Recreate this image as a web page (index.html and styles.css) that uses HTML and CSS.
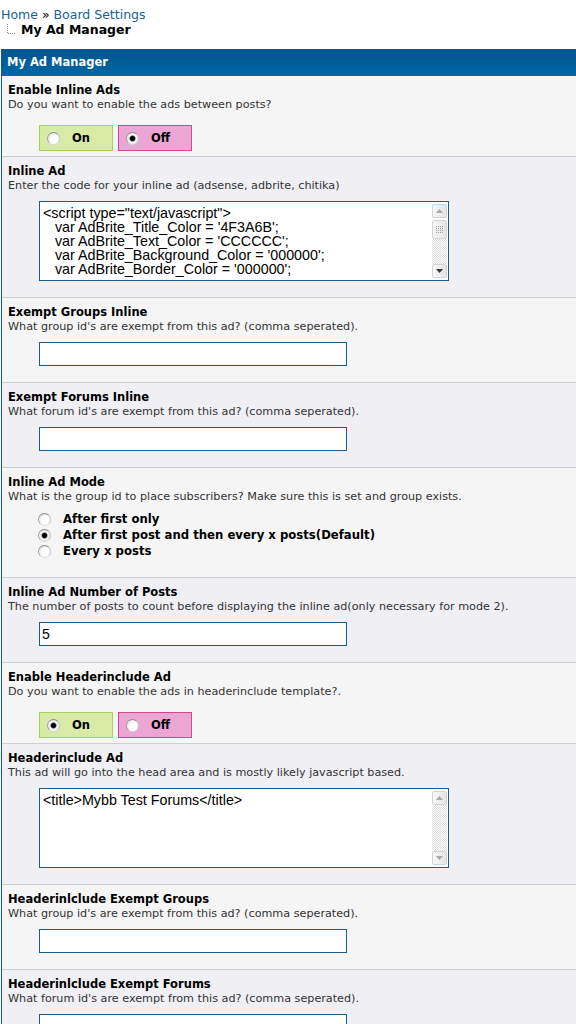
FILE: index.html
```html
<!DOCTYPE html>
<html lang="en">
<head>
    <meta charset="UTF-8">
    <title>My Ad Manager</title>
    <link rel="stylesheet" href="styles.css">
</head>
<body>
<div class="nav">
    <a href="#">Home</a> &raquo; <a href="#">Board Settings</a>
    <div class="nav-current">
        <svg class="tree" width="14" height="15" viewBox="0 0 14 15">
            <path d="M6.5 1V10.5H14" fill="none" stroke="#8a8a8a" stroke-width="1" stroke-dasharray="1 1"/>
        </svg>
        My Ad Manager
    </div>
</div>

<div class="panel">
    <div class="panel-head">My Ad Manager</div>

    <div class="row">
        <div class="label">Enable Inline Ads</div>
        <div class="desc">Do you want to enable the ads between posts?</div>
        <div class="toggle">
            <label class="yes"><input type="radio" name="inline_enable">On</label>
            <label class="no"><input type="radio" name="inline_enable" checked>Off</label>
        </div>
    </div>

    <div class="row">
        <div class="label">Inline Ad</div>
        <div class="desc">Enter the code for your inline ad (adsense, adbrite, chitika)</div>
        <div class="codebox">
            <textarea class="code">&lt;script type="text/javascript"&gt;
   var AdBrite_Title_Color = '4F3A6B';
   var AdBrite_Text_Color = 'CCCCCC';
   var AdBrite_Background_Color = '000000';
   var AdBrite_Border_Color = '000000';

   var AdBrite_URL_Color = '008000';
&lt;/script&gt;
&lt;span style="white-space:nowrap;"&gt;
&lt;script src="http://ads.adbrite.com/mb/text_group.php?sid=0" type="text/javascript"&gt;&lt;/script&gt;
&lt;/span&gt;</textarea>
            <div class="scrollbar">
                <div class="sb-btn">
                    <svg width="7" height="4" viewBox="0 0 7 4"><path d="M0 4L3.5 0L7 4Z" fill="#a8a8a8"/></svg>
                </div>
                <div class="sb-thumb">
                    <svg width="7" height="7" viewBox="0 0 7 7" fill="#9a9a9a">
                        <rect x="0" y="0" width="1" height="1"/><rect x="2" y="0" width="1" height="1"/><rect x="4" y="0" width="1" height="1"/><rect x="6" y="0" width="1" height="1"/>
                        <rect x="0" y="2" width="1" height="1"/><rect x="2" y="2" width="1" height="1"/><rect x="4" y="2" width="1" height="1"/><rect x="6" y="2" width="1" height="1"/>
                        <rect x="0" y="4" width="1" height="1"/><rect x="2" y="4" width="1" height="1"/><rect x="4" y="4" width="1" height="1"/><rect x="6" y="4" width="1" height="1"/>
                        <rect x="0" y="6" width="1" height="1"/><rect x="2" y="6" width="1" height="1"/><rect x="4" y="6" width="1" height="1"/><rect x="6" y="6" width="1" height="1"/>
                    </svg>
                </div>
                <div class="sb-track"></div>
                <div class="sb-btn">
                    <svg width="7" height="4" viewBox="0 0 7 4"><path d="M0 0L3.5 4L7 0Z" fill="#3a3a3a"/></svg>
                </div>
            </div>
        </div>
    </div>

    <div class="row">
        <div class="label">Exempt Groups Inline</div>
        <div class="desc">What group id's are exempt from this ad? (comma seperated).</div>
        <input class="field" type="text">
    </div>

    <div class="row">
        <div class="label">Exempt Forums Inline</div>
        <div class="desc">What forum id's are exempt from this ad? (comma seperated).</div>
        <input class="field" type="text">
    </div>

    <div class="row">
        <div class="label">Inline Ad Mode</div>
        <div class="desc">What is the group id to place subscribers? Make sure this is set and group exists.</div>
        <div class="choices">
            <label><input type="radio" name="inline_mode">After first only</label>
            <label><input type="radio" name="inline_mode" checked>After first post and then every x posts(Default)</label>
            <label><input type="radio" name="inline_mode">Every x posts</label>
        </div>
    </div>

    <div class="row">
        <div class="label">Inline Ad Number of Posts</div>
        <div class="desc">The number of posts to count before displaying the inline ad(only necessary for mode 2).</div>
        <input class="field" type="text" value="5">
    </div>

    <div class="row">
        <div class="label">Enable Headerinclude Ad</div>
        <div class="desc">Do you want to enable the ads in headerinclude template?.</div>
        <div class="toggle">
            <label class="yes"><input type="radio" name="header_enable" checked>On</label>
            <label class="no"><input type="radio" name="header_enable">Off</label>
        </div>
    </div>

    <div class="row">
        <div class="label">Headerinclude Ad</div>
        <div class="desc">This ad will go into the head area and is mostly likely javascript based.</div>
        <div class="codebox">
            <textarea class="code">&lt;title&gt;Mybb Test Forums&lt;/title&gt;</textarea>
            <div class="scrollbar">
                <div class="sb-btn">
                    <svg width="7" height="4" viewBox="0 0 7 4"><path d="M0 4L3.5 0L7 4Z" fill="#a8a8a8"/></svg>
                </div>
                <div class="sb-track"></div>
                <div class="sb-btn">
                    <svg width="7" height="4" viewBox="0 0 7 4"><path d="M0 0L3.5 4L7 0Z" fill="#a8a8a8"/></svg>
                </div>
            </div>
        </div>
    </div>

    <div class="row">
        <div class="label">Headerinlclude Exempt Groups</div>
        <div class="desc">What group id's are exempt from this ad? (comma seperated).</div>
        <input class="field" type="text">
    </div>

    <div class="row">
        <div class="label">Headerinlclude Exempt Forums</div>
        <div class="desc">What forum id's are exempt from this ad? (comma seperated).</div>
        <input class="field" type="text">
    </div>
</div>
</body>
</html>
```

FILE: styles.css
```css
html, body {
    overflow: hidden;
}

body {
    margin: 0;
    padding: 7px 0 0 1px;
    background-color: #fff;
    font-family: "DejaVu Sans", Verdana, sans-serif;
    color: #000;
}

.nav {
    font-size: 12.5px;
    line-height: 15px;
    margin-bottom: 11px;
}

.nav a {
    color: #15629a;
    text-decoration: none;
}

.nav-current {
    display: flex;
    align-items: flex-start;
    font-weight: bold;
}

.tree {
    margin: 1px 6px 0 0;
}

.panel {
    width: 800px;
    border-left: 1px solid #0f5b8f;
}

.panel-head {
    height: 27px;
    line-height: 27px;
    padding-left: 5px;
    background: linear-gradient(#03558b, #0067a7);
    color: #fff;
    font-size: 11.5px;
    font-weight: bold;
}

.row {
    padding: 7px 0 0 6px;
    border-bottom: 1px solid #cfcfcf;
}

.row:nth-child(even) {
    background-color: #f5f5f5;
}

.row:nth-child(odd) {
    background-color: #efeff4;
}

.label {
    font-size: 11.5px;
    font-weight: bold;
    line-height: 15px;
}

.desc {
    font-size: 11.2px;
    line-height: 13px;
    color: #333;
}

.field {
    display: block;
    box-sizing: border-box;
    width: 308px;
    height: 24px;
    margin: 9px 0 16px 31px;
    padding: 0 2px;
    border: 1px solid #1b5c8c;
    background-color: #fff;
    font-family: "Liberation Sans", Arial, sans-serif;
    font-size: 14px;
    color: #000;
    outline: none;
}

.codebox {
    display: flex;
    box-sizing: border-box;
    width: 410px;
    height: 80px;
    margin: 9px 0 16px 31px;
    border: 1px solid #1b5c8c;
    background-color: #fff;
}

.code {
    flex: 1;
    min-width: 0;
    margin: 0;
    padding: 4px 0 0 3px;
    border: none;
    background: transparent;
    font-family: "Liberation Sans", Arial, sans-serif;
    font-size: 14.3px;
    line-height: 14px;
    color: #000;
    white-space: pre;
    overflow: hidden;
    resize: none;
    outline: none;
}

.scrollbar {
    display: flex;
    flex-direction: column;
    width: 15px;
    padding: 2px 1px 2px 0;
}

.sb-btn,
.sb-thumb {
    display: flex;
    align-items: center;
    justify-content: center;
    box-sizing: border-box;
    border: 1px solid #d4d4d4;
    border-radius: 2px;
    background: linear-gradient(90deg, #f7f7f7, #e4e4e4);
}

.sb-btn {
    height: 14px;
}

.sb-thumb {
    height: 19px;
    margin-top: 2px;
}

.sb-track {
    flex: 1;
    background: repeating-conic-gradient(#dedede 0 25%, #fbfbfb 0 50%) 0 0 / 2px 2px;
}

.toggle {
    display: flex;
    gap: 5px;
    margin: 14px 0 5px 31px;
}

.toggle label {
    display: flex;
    align-items: center;
    box-sizing: border-box;
    width: 74px;
    height: 26px;
    padding-left: 7px;
    font-size: 11.5px;
    font-weight: bold;
}

.toggle .yes {
    background-color: #d7eba6;
    border: 1px solid #a3d15c;
}

.toggle .no {
    background-color: #eba6d5;
    border: 1px solid #d2478f;
}

.choices {
    margin: 8px 0 18px 30px;
}

.choices label {
    display: flex;
    align-items: center;
    height: 16px;
    font-size: 11.7px;
    font-weight: bold;
}

input[type="radio"] {
    appearance: none;
    -webkit-appearance: none;
    width: 13px;
    height: 13px;
    margin: 0 12px 0 0;
    border: 1px solid;
    border-color: #8f8f8f #c4c4c4 #d8d8d8 #a0a0a0;
    border-radius: 50%;
    background: radial-gradient(circle at 65% 65%, #fff 0 40%, #e6e6e6 75%, #cdcdcd);
}

input[type="radio"]:checked {
    background: radial-gradient(circle, #000 0 2px, #444 2.5px, #f6f6f6 3.5px, #e6e6e6 75%, #cdcdcd);
}
```
